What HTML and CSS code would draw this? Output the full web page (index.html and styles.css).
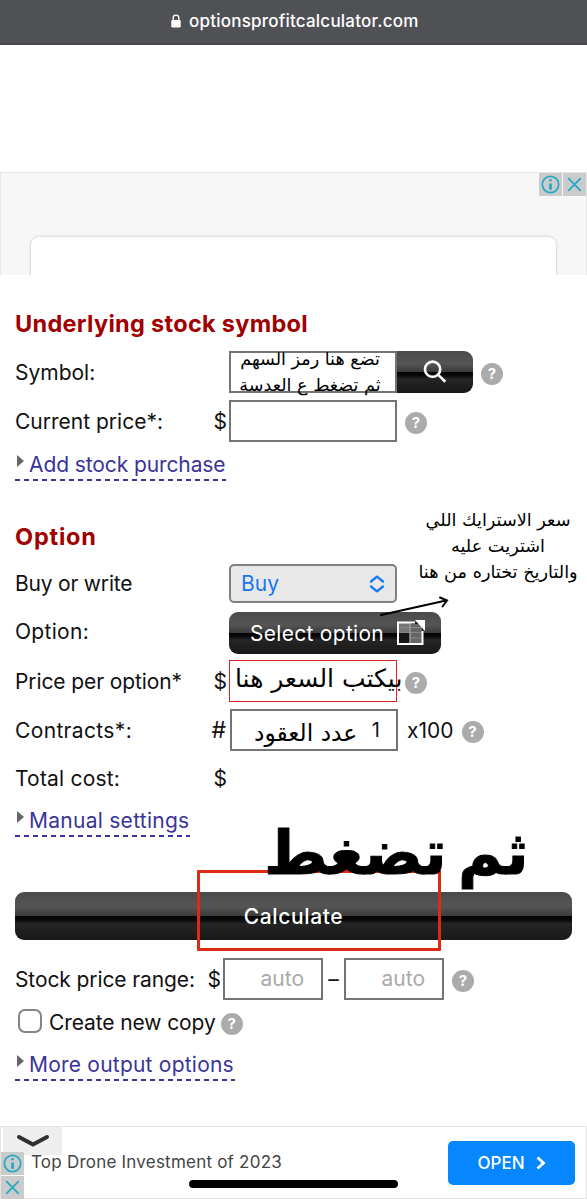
FILE: index.html
```html
<!DOCTYPE html>
<html lang="en">
<head>
  <meta charset="UTF-8">
  <meta name="viewport" content="width=device-width, initial-scale=1">
  <title>Options Profit Calculator</title>
  <link rel="stylesheet" href="styles.css">
</head>
<body>

  <!-- Browser bar -->
  <header class="browser-bar">
    <svg class="lock" viewBox="0 0 10 14" width="10" height="14">
      <path d="M2.2 7V4a2.8 2.8 0 0 1 5.6 0v3" fill="none" stroke="#fff" stroke-width="1.3"/>
      <rect x="0.3" y="6" width="9.4" height="7.6" rx="1.3" fill="#fff"/>
    </svg>
    <span class="url">optionsprofitcalculator.com</span>
  </header>

  <!-- Top ad -->
  <div class="ad-top">
    <div class="ad-card"></div>
    <div class="ad-controls">
      <span class="ad-btn"><svg viewBox="0 0 22 22"><circle cx="11" cy="11" r="7.8"/><path d="M11 10v6M11 6v2" stroke-width="2.6"/></svg></span>
      <span class="ad-btn"><svg viewBox="0 0 22 22"><path d="M5 5l12 12M17 5L5 17"/></svg></span>
    </div>
  </div>

  <main class="form">
    <h2 class="first">Underlying stock symbol</h2>

    <div class="row symbol-row">
      <span class="label">Symbol:</span>
      <span class="prefix"></span>
      <div class="box symbol-box"></div>
      <button class="dark-btn search-btn">
        <svg viewBox="0 0 24 24" width="24" height="24" fill="none" stroke="#fff" stroke-width="2.6"><circle cx="9.6" cy="9.2" r="7.6"/><path d="M15 14.6l7.3 7.2"/></svg>
      </button>
      <span class="help">?</span>
      <div class="note note-symbol" dir="rtl">
        <div>تضع هنا رمز السهم</div>
        <div>ثم تضغط ع العدسة</div>
      </div>
    </div>

    <div class="row price-row">
      <span class="label">Current price*:</span>
      <span class="prefix">$</span>
      <div class="box"></div>
      <span class="help">?</span>
    </div>

    <a class="toggle w-add"><i></i><span>Add stock purchase</span></a>

    <h2 class="second">Option</h2>

    <div class="row buy-row">
      <span class="label">Buy or write</span>
      <span class="prefix"></span>
      <div class="select"><span>Buy</span>
        <svg viewBox="0 0 16 18" width="16" height="18" fill="none" stroke="#1677f2" stroke-width="2.3" stroke-linecap="round" stroke-linejoin="round"><path d="M2 6.5l6-4.8 6 4.8M2 11.5l6 4.8 6-4.8"/></svg>
      </div>
      <div class="note note-strike" dir="rtl">
        <div>سعر الاسترايك اللي</div>
        <div>اشتريت عليه</div>
        <div>والتاريخ تختاره من هنا</div>
      </div>
    </div>

    <div class="row option-row">
      <span class="label">Option:</span>
      <span class="prefix"></span>
      <button class="dark-btn option-btn"><span>Select option</span>
        <svg viewBox="0 0 30 26" width="30" height="26">
          <rect x="2" y="2.5" width="25" height="21.5" fill="#161616"/>
          <rect x="2" y="2.5" width="12" height="10" fill="#777"/>
          <rect x="14" y="4" width="12" height="19" fill="#666"/>
          <path d="M2 7.5h24M2 12.5h24M14 18h12" stroke="#888" stroke-width="1"/>
          <path d="M14 3v20" stroke="#999" stroke-width="1.5"/>
          <path d="M19 2.5H2V24h24.5V11" fill="none" stroke="#fff" stroke-width="2"/>
          <path d="M19 0h10v11z" fill="#fff"/>
        </svg>
      </button>
      <svg class="arrow" viewBox="0 0 72 24" width="72" height="24" fill="none" stroke="#000" stroke-width="2" stroke-linecap="round"><path d="M2 20L67 5.5M61 2.5l7 3-4.5 6"/></svg>
    </div>

    <div class="row per-row">
      <span class="label">Price per option*</span>
      <span class="prefix">$</span>
      <div class="box red"></div>
      <span class="help">?</span>
      <div class="note note-price" dir="rtl">بيكتب السعر هنا</div>
    </div>

    <div class="row contracts-row">
      <span class="label w-contracts">Contracts*:</span>
      <span class="prefix hash">#</span>
      <div class="box value">1</div>
      <span class="times">x100</span>
      <span class="help">?</span>
      <div class="note note-count" dir="rtl">عدد العقود</div>
    </div>

    <div class="row total-row">
      <span class="label w-total">Total cost:</span>
      <span class="prefix">$</span>
    </div>

    <a class="toggle w-manual"><i></i><span>Manual settings</span></a>

    <div class="calc">
      <button class="dark-btn calc-btn">Calculate</button>
      <div class="marker"></div>
      <div class="note note-press" dir="rtl">ثم تضغط</div>
    </div>

    <div class="row range-row">
      <span class="range-label">Stock price range:</span>
      <span class="range-dollar">$</span>
      <div class="box small">auto</div>
      <span class="dash">–</span>
      <div class="box small">auto</div>
      <span class="help">?</span>
    </div>

    <div class="row copy-row">
      <span class="checkbox"></span>
      <span class="copy-label">Create new copy</span>
      <span class="help">?</span>
    </div>

    <a class="toggle w-more"><i></i><span>More output options</span></a>
  </main>

  <!-- Bottom ad -->
  <footer class="ad-bottom">
    <span class="ad-text">Top Drone Investment of 2023</span>
    <span class="open-btn">OPEN
      <svg viewBox="0 0 10 14" width="10" height="14" fill="none" stroke="#fff" stroke-width="2.8"><path d="M1.5 1.5L7.5 7l-6 5.5"/></svg>
    </span>
    <div class="collapse">
      <svg viewBox="0 0 34 14" width="34" height="14" fill="none" stroke="#303030" stroke-width="4" stroke-linecap="round"><path d="M3 3l14 7.5L31 3"/></svg>
    </div>
    <div class="ad-side">
      <span class="ad-btn"><svg viewBox="0 0 22 22"><circle cx="11" cy="11" r="7.8"/><path d="M11 10v6M11 6v2" stroke-width="2.6"/></svg></span>
      <span class="ad-btn"><svg viewBox="0 0 22 22"><path d="M5 5l12 12M17 5L5 17"/></svg></span>
    </div>
    <div class="home-bar"></div>
  </footer>

</body>
</html>
```
FILE: styles.css
```css
* {
  box-sizing: border-box;
}
body {
  margin: 0;
  width: 587px;
  height: 1200px;
  overflow: hidden;
  background: #fff;
  color: #111;
  font-family: Inter, "DejaVu Sans", sans-serif;
  font-size: 21px;
}
/* Browser bar */
.browser-bar {
  height: 45px;
  background: #505155;
  border-bottom: 2px solid #47484b;
  display: flex;
  align-items: center;
  padding: 0 0 2px 171px;
  color: #fff;
}
.url {
  margin-left: 8px;
  font-size: 17px;
  font-weight: 500;
  letter-spacing: 0.22px;
}
/* Top ad */
.ad-top {
  position: relative;
  margin-top: 127px;
  height: 103px;
  padding: 64px 30px 0;
  overflow: hidden;
  background: #f7f7f7;
  border: 1px solid #e6e6e6;
  border-bottom: 0;
}
.ad-card {
  height: 80px;
  background: #fff;
  border-radius: 8px;
  box-shadow: 0 0 3px rgba(0,0,0,0.25);
}
.ad-controls {
  position: absolute;
  top: 0;
  right: 0;
  display: flex;
  gap: 1px;
}
.ad-btn {
  display: block;
  width: 23px;
  height: 23px;
  background: #cbcbcb;
}
.ad-btn svg {
  display: block;
  width: 23px;
  height: 23px;
  fill: none;
  stroke: #24a9c6;
  stroke-width: 1.7;
}
/* Calculator form */
.form {
  padding: 34px 15px 0;
  height: 851px;
}
h2 {
  margin: 0;
  height: 30px;
  line-height: 29px;
  font-size: 23.5px;
  font-weight: 700;
  color: #a10000;
  white-space: nowrap;
}
.first {
  letter-spacing: 0.3px;
}
.second {
  margin-top: 41px;
  letter-spacing: 0.8px;
}
.row {
  position: relative;
  display: flex;
  align-items: center;
  height: 42px;
  white-space: nowrap;
}
.symbol-row { margin-top: 12px; }
.price-row { margin-top: 7px; }
.buy-row { margin-top: 12px; height: 39px; }
.option-row { margin-top: 9px; }
.per-row { margin-top: 6px; }
.contracts-row { margin-top: 7px; }
.total-row { margin-top: 11px; height: 32px; }
.range-row { margin-top: 18px; }
.copy-row { margin-top: 6px; height: 32px; }
.label {
  width: 192px;
}
.buy-row .label {
  letter-spacing: -0.2px;
}
.option-row .label {
  padding-bottom: 4px;
  letter-spacing: 0.3px;
}
.per-row .label {
  letter-spacing: -0.1px;
}
.w-contracts {
  letter-spacing: 0.35px;
}
.w-total {
  letter-spacing: 0.2px;
}
.prefix {
  width: 22px;
  padding-right: 2px;
  text-align: right;
}
.hash {
  padding-right: 3px;
  font-size: 23px;
}
.box {
  width: 168px;
  height: 42px;
  border: 2px solid #747474;
}
.help {
  width: 22px;
  height: 22px;
  margin: 4px 0 0 8px;
  border-radius: 50%;
  background: #ababab;
  color: #fff;
  font-size: 15px;
  font-weight: 700;
  line-height: 22px;
  text-align: center;
}
.dark-btn {
  display: flex;
  align-items: center;
  justify-content: center;
  padding: 0;
  border: 0;
  border-radius: 9px;
  background: linear-gradient(#4a4a4a, #555 30%, #3c3c3c 49%, #050505 51%, #080808 58%, #252525 66%, #181818);
  color: #fff;
  font-family: inherit;
  font-size: 21px;
}
.search-btn {
  width: 76px;
  height: 42px;
  border-radius: 0 9px 9px 0;
}
.toggle {
  display: flex;
  height: 31px;
  padding-left: 1px;
  line-height: 30px;
  color: #39349a;
  white-space: nowrap;
  background: repeating-linear-gradient(90deg, #39349a 0 5px, transparent 5px 9px) left bottom / 100% 2px no-repeat;
}
.toggle i {
  width: 0;
  height: 0;
  margin: 5px 5px 0 1px;
  border: 6px solid transparent;
  border-left: 7px solid #666;
  border-right: 0;
}
.w-add { width: 211px; margin-top: 8px; letter-spacing: -0.1px; }
.w-manual { width: 175px; margin-top: 12px; letter-spacing: 0.27px; }
.w-more { width: 220px; margin-top: 12px; letter-spacing: 0.22px; }
.select {
  display: flex;
  align-items: center;
  justify-content: space-between;
  width: 168px;
  height: 39px;
  padding: 0 10px;
  border: 2px solid #808080;
  border-radius: 5px;
  background: #e8e8e8;
  color: #1677f2;
}
.option-btn {
  width: 212px;
  height: 42px;
  gap: 12px;
  padding-left: 6px;
  letter-spacing: 0.3px;
}
.red {
  border: 1px solid #e02020;
}
.value {
  margin-left: 1px;
  padding: 0 16px 0 0;
  line-height: 39px;
  font-size: 20px;
  text-align: right;
}
.times {
  margin-left: 9px;
}
/* Calculate button with its marker */
.calc {
  position: relative;
  margin-top: 55px;
}
.calc-btn {
  width: 557px;
  height: 48px;
  font-weight: 500;
  letter-spacing: 0.65px;
}
.marker {
  position: absolute;
  left: 182px;
  top: -22px;
  width: 244px;
  height: 81px;
  border: 3px solid #dc2a14;
  border-radius: 1px;
}
.range-label {
  width: 181px;
  letter-spacing: -0.1px;
}
.range-dollar {
  width: 27px;
  padding-right: 2px;
  text-align: right;
}
.small {
  width: 100px;
  padding-right: 17px;
  line-height: 38px;
  text-align: right;
  color: #aaa;
}
.dash {
  width: 21px;
  text-align: center;
}
.checkbox {
  width: 24px;
  height: 24px;
  margin: 0 7px 3px 3px;
  border: 2px solid #858585;
  border-radius: 7px;
}
.copy-label {
  letter-spacing: -0.1px;
}
.copy-row .help {
  margin-left: 5px;
}
/* Handwritten notes */
.note {
  position: absolute;
  z-index: 2;
  color: #000;
  font-family: "DejaVu Sans", sans-serif;
  white-space: nowrap;
}
.note-symbol {
  left: 215px;
  top: -5px;
  width: 160px;
  font-size: 17.6px;
  line-height: 26px;
  text-align: center;
}
.note-strike {
  left: 400px;
  top: -57px;
  width: 166px;
  font-size: 17.7px;
  line-height: 26px;
  text-align: center;
}
.note-price {
  left: 220px;
  top: 0;
  font-size: 25px;
  line-height: 38px;
}
.note-count {
  left: 239px;
  top: 5px;
  font-size: 23.4px;
  line-height: 38px;
}
.note-press {
  left: 249px;
  top: -79px;
  font-size: 61px;
  font-weight: 700;
  line-height: 80px;
  word-spacing: -10px;
  -webkit-text-stroke: 1px #000;
}
.arrow {
  position: absolute;
  left: 364px;
  top: -17px;
}
/* Bottom ad */
.ad-bottom {
  position: relative;
  height: 73px;
  border: 1px solid #e4e4e4;
  background: #fff;
}
.ad-text {
  position: absolute;
  left: 30px;
  top: 24px;
  font-size: 17px;
  line-height: 22px;
  letter-spacing: 0.22px;
  color: #444;
}
.open-btn {
  position: absolute;
  right: 11px;
  top: 14px;
  width: 127px;
  height: 44px;
  display: flex;
  align-items: center;
  justify-content: center;
  gap: 11px;
  border-radius: 5px;
  background: #0787ff;
  color: #fff;
  font-size: 17px;
  font-weight: 500;
}
.collapse {
  position: absolute;
  left: 2px;
  top: 0;
  width: 59px;
  height: 28px;
  padding: 7px 0 0 13px;
  background: #eee;
}
.collapse svg {
  display: block;
}
.ad-side {
  position: absolute;
  left: 0;
  top: 25px;
  display: grid;
  gap: 1px;
}
.home-bar {
  position: absolute;
  left: 188px;
  top: 53px;
  width: 209px;
  height: 8px;
  border-radius: 4px;
  background: #000;
}
```
